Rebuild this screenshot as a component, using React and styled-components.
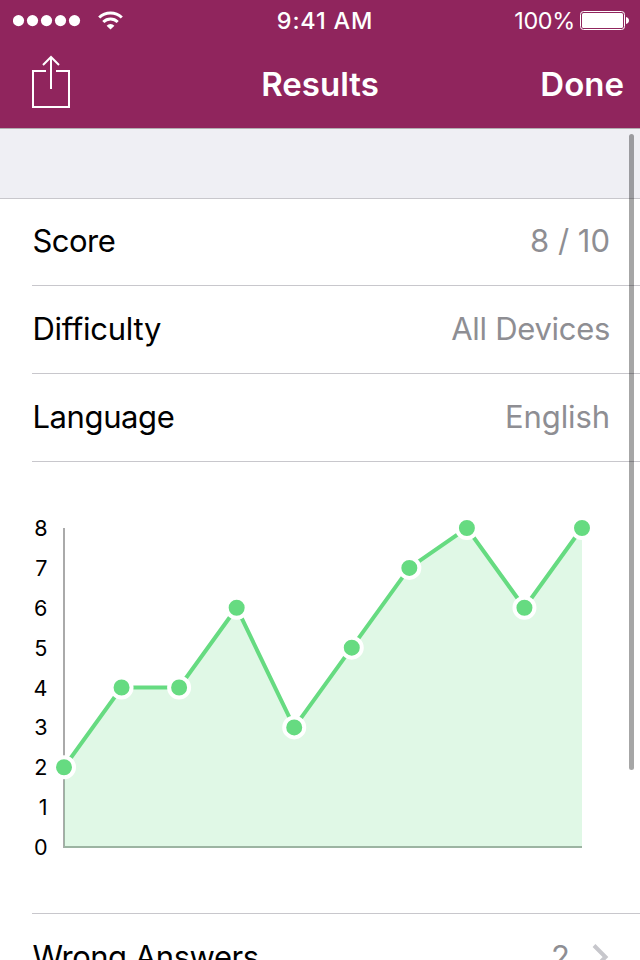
import React from "react";
import styled, { createGlobalStyle } from "styled-components";

const GlobalStyle = createGlobalStyle`
  * { box-sizing: border-box; }
  body { margin: 0; background: #fff; overflow: hidden; }
  svg { display: block; flex: none; }
`;

const Screen = styled.div`
  position: relative;
  width: 640px;
  height: 960px;
  overflow: hidden;
  display: flex;
  flex-direction: column;
  background: #fff;
  color: #000;
  font-family: Inter, "Liberation Sans", sans-serif;
`;

const Header = styled.header`
  flex: none;
  height: 129px;
  background: #90255d;
  border-bottom: 1px solid #b2aeb2;
  color: #fff;
`;

const StatusBar = styled.div`
  display: grid;
  grid-template-columns: 1fr auto 1fr;
  align-items: center;
  height: 40px;
  padding: 1px 11px 0 13px;
  font-size: 23.4px;
  line-height: 39px;
`;

const Signal = styled.div`
  display: flex;
  align-items: center;
  gap: 17px;
`;

const Clock = styled.div`
  padding-left: 8px;
  font-weight: 500;
  letter-spacing: 0.85px;
`;

const Battery = styled.div`
  display: flex;
  align-items: center;
  justify-content: flex-end;
  gap: 5px;
`;

const Percent = styled.span`
  letter-spacing: -0.3px;
`;

const NavBar = styled.nav`
  display: grid;
  grid-template-columns: 1fr auto 1fr;
  align-items: center;
  height: 88px;
  padding: 0 16px 0 32px;
`;

const Title = styled.h1`
  margin: 0 16px 0 0;
  font-size: 33px;
  font-weight: 600;
`;

const NavButton = styled.button`
  justify-self: ${(p) => p.$side};
  display: flex;
  padding: 0 0 ${(p) => p.$lift || 0}px;
  border: 0;
  background: none;
  color: inherit;
  font: 600 33px Inter, "Liberation Sans", sans-serif;
`;

const SectionGap = styled.div`
  flex: none;
  height: 70px;
  background: #efeff4;
  border-bottom: 1px solid #c8c7cc;
`;

const List = styled.main`
  flex: none;
  padding-left: 32px;
`;

const Row = styled.div`
  display: flex;
  align-items: center;
  justify-content: space-between;
  height: ${(p) => p.$height || 88}px;
  padding: 0 30px ${(p) => p.$lift || 2}px 0.4px;
  border-bottom: 1px solid #c8c7cc;
  font-size: 31px;
`;

const Label = styled.span`
  letter-spacing: ${(p) => p.$track || 0}px;
`;

const Value = styled.span`
  display: flex;
  align-items: center;
  gap: 22px;
  color: #8e8e93;
  letter-spacing: ${(p) => p.$track || 0}px;
`;

const ChartCell = styled.section`
  display: flex;
  height: 452px;
  padding-top: 53px;
  border-bottom: 1px solid #c8c7cc;
`;

const Scale = styled.div`
  flex: none;
  display: flex;
  flex-direction: column;
  align-items: flex-end;
  width: 15.5px;
  font-size: 21.6px;
`;

const Tick = styled.span`
  height: 39.875px;
  line-height: 26px;
`;

const Plot = styled.svg`
  margin-left: 0.5px;
`;

const ScrollThumb = styled.div`
  position: absolute;
  top: 134px;
  right: 6px;
  width: 5px;
  height: 636px;
  border-radius: 3px;
  background: rgba(0, 0, 0, 0.35);
`;

const scores = [2, 4, 4, 6, 3, 5, 7, 8, 6, 8];
const points = scores.map((v, i) => [16 + (i * 518) / 9, 332 - v * 39.875]);
const line = points.map((p) => p.join(",")).join(" ");

function Chart() {
  return (
    <Plot width="560" height="350" viewBox="0 0 560 350">
      <path d="M16 13V332H534" fill="none" stroke="#aaa" strokeWidth="2" />
      <polygon points={`16,333 ${line} 534,333`} fill="#66db81" fillOpacity="0.2" />
      <polyline points={line} fill="none" stroke="#66db81" strokeWidth="4" />
      {points.map(([x, y]) => (
        <circle key={x} cx={x} cy={y} r="10" fill="#66db81" stroke="#fff" strokeWidth="4" />
      ))}
    </Plot>
  );
}

function SignalDots() {
  return (
    <svg width="68" height="12" viewBox="0 0 68 12" fill="currentColor">
      {[5.5, 19.5, 33.5, 47.5, 61.5].map((x) => (
        <circle key={x} cx={x} cy="5.6" r="5.6" />
      ))}
    </svg>
  );
}

function WifiIcon() {
  return (
    <svg width="26" height="20" viewBox="0 0 26 20" fill="none" stroke="currentColor" strokeWidth="3">
      <path d="M1.2 6.5a16.4 16.4 0 0 1 22.6 0" />
      <path d="M5.3 11a10.2 10.2 0 0 1 14.4 0" />
      <path d="M12.5 18.6 8.6 14.7a5.5 5.5 0 0 1 7.8 0Z" fill="currentColor" stroke="none" />
    </svg>
  );
}

function BatteryIcon() {
  return (
    <svg width="49" height="20" viewBox="0 0 49 20" fill="currentColor">
      <rect x="0.5" y="0.5" width="44" height="18" rx="3" fill="none" stroke="currentColor" />
      <rect x="2" y="2" width="41" height="15" rx="1.5" />
      <path d="M46 6c1.8.3 3 1.6 3 3.5s-1.2 3.2-3 3.5Z" />
    </svg>
  );
}

function ShareIcon() {
  return (
    <svg width="38" height="53" viewBox="0 0 38 53" fill="none" stroke="currentColor" strokeWidth="2">
      <path d="M14 16H1V52H37V16H24M19 34V2M11 10 19 2 27 10" />
    </svg>
  );
}

function Chevron() {
  return (
    <svg width="18" height="26" viewBox="0 0 18 26" fill="none" stroke="#c7c7cc" strokeWidth="4">
      <path d="M2 2.5 13.500 14 2 25.500" />
    </svg>
  );
}

export default function App() {
  return (
    <Screen>
      <GlobalStyle />
      <Header>
        <StatusBar>
          <Signal><SignalDots /><WifiIcon /></Signal>
          <Clock>9:41 AM</Clock>
          <Battery><Percent>100%</Percent><BatteryIcon /></Battery>
        </StatusBar>
        <NavBar>
          <NavButton $side="start" $lift={6} aria-label="Share"><ShareIcon /></NavButton>
          <Title>Results</Title>
          <NavButton $side="end">Done</NavButton>
        </NavBar>
      </Header>
      <SectionGap />
      <List>
        <Row $height={87} $lift={4}>
          <Label $track={-0.5}>Score</Label>
          <Value>8 / 10</Value>
        </Row>
        <Row>
          <Label $track={-0.25}>Difficulty</Label>
          <Value $track={-0.3}>All Devices</Value>
        </Row>
        <Row>
          <Label $track={-0.38}>Language</Label>
          <Value $track={-0.1}>English</Value>
        </Row>
        <ChartCell>
          <Scale>
            {[8, 7, 6, 5, 4, 3, 2, 1, 0].map((n) => <Tick key={n}>{n}</Tick>)}
          </Scale>
          <Chart />
        </ChartCell>
        <Row $lift={3}>
          <Label $track={-0.46}>Wrong Answers</Label>
          <Value>2<Chevron /></Value>
        </Row>
      </List>
      <ScrollThumb />
    </Screen>
  );
}
